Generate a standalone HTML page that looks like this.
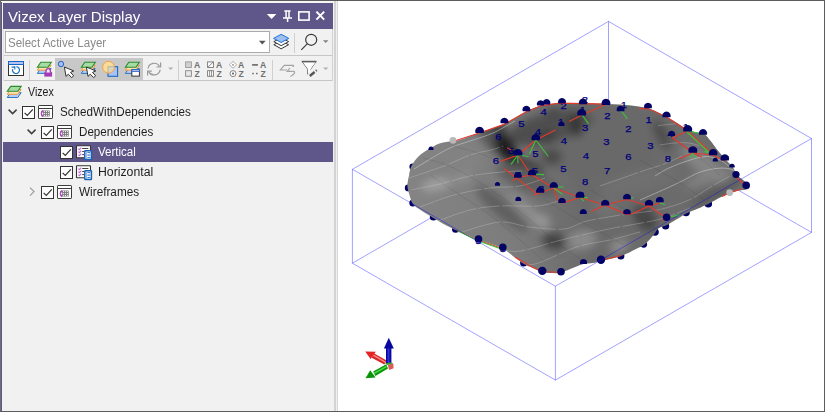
<!DOCTYPE html>
<html>
<head>
<meta charset="utf-8">
<title>Vizex Layer Display</title>
<style>
html,body{margin:0;padding:0;}
body{width:825px;height:412px;overflow:hidden;background:#fff;position:relative;font-family:"Liberation Sans",sans-serif;}
.abs{position:absolute;}
#panel{position:absolute;left:0;top:0;width:338px;height:412px;background:#f1f1f1;}
#titlebar{position:absolute;left:3px;top:3px;width:330px;height:26px;background:#5f5689;}
.t{position:absolute;white-space:nowrap;transform-origin:0 0;line-height:1;}
#title{left:8px;top:9.3px;font-size:15px;color:#fff;transform:scaleX(1.007);}
#combo{position:absolute;left:5px;top:31px;width:263px;height:20px;border:1px solid #ababab;background:#fff;}
#ph{left:8px;top:37px;font-size:12px;color:#8a8a8a;transform:scaleX(0.962);}
.hl{position:absolute;background:#cfcfcf;height:1px;}
.vl{position:absolute;background:#cfcfcf;width:1px;}
.row{position:absolute;left:3px;width:330px;height:20px;}
.lbl{font-size:12px;color:#1e1e1e;}
.cb{position:absolute;width:11px;height:11px;border:1px solid #333;background:#fff;}
</style>
</head>
<body>
<div id="panel">
  <div class="abs" style="left:0;top:0;width:1px;height:412px;background:#6e6e6e"></div>
  <div class="abs" style="left:1px;top:2px;width:1px;height:409px;background:#5f5689"></div>
  <div class="abs" style="left:2px;top:1px;width:332px;height:28px;background:#f5f5f3"></div>
  <div id="titlebar"></div>
  <div id="title" class="t">Vizex Layer Display</div>
  <div id="combo"></div>
  <div id="ph" class="t">Select Active Layer</div>
  <div class="hl" style="left:3px;top:55px;width:330px;background:#c6c6c6"></div>
  <div class="hl" style="left:3px;top:80px;width:330px;background:#c6c6c6"></div>
  <div class="vl" style="left:332px;top:29px;height:52px;background:#d2d2d2"></div>
  <div class="vl" style="left:3px;top:29px;height:52px;background:#e2e2e2"></div>
  <!-- tree -->
  <div class="row" style="top:142px;background:#5f5689"></div>
  <div class="t lbl" style="left:28.4px;top:86.2px;transform:scaleX(0.885)">Vizex</div>
  <div class="t lbl" style="left:59.6px;top:106.2px;transform:scaleX(0.971)">SchedWithDependencies</div>
  <div class="t lbl" style="left:78.8px;top:126.2px;transform:scaleX(0.967)">Dependencies</div>
  <div class="t lbl" style="left:98px;top:146.2px;color:#fff;transform:scaleX(0.962)">Vertical</div>
  <div class="t lbl" style="left:98px;top:166.2px;transform:scaleX(1.022)">Horizontal</div>
  <div class="t lbl" style="left:79px;top:186.2px;transform:scaleX(0.98)">Wireframes</div>

<svg class="abs" style="left:0;top:0" width="338" height="412" viewBox="0 0 338 412">
<defs>
  <g id="layers">
    <polygon points="3.6,6.6 14.2,6.6 10.9,11.4 0.3,11.4" fill="#b4cdf4" stroke="#1b6ac2" stroke-width="0.9"/>
    <polygon points="3.6,3.4 14.2,3.4 10.9,8.2 0.3,8.2" fill="#fbe2ae" stroke="#f0913a" stroke-width="0.9"/>
    <polygon points="3.8,0.3 14.3,0.3 11,5.2 0.4,5.2" fill="#a6dba6" stroke="#2c8c2c" stroke-width="1.1"/>
  </g>
  <g id="cursor">
    <polygon points="0,0 1.6,9.4 3.9,7.2 7.2,10.6 9.3,8.8 6.1,5.4 9.4,3.9" fill="#fff" stroke="#333" stroke-width="1" stroke-linejoin="round"/>
  </g>
  <g id="chk">
    <rect x="0.5" y="0.5" width="12" height="12" fill="#fff" stroke="#333" stroke-width="1"/>
    <polyline points="2.6,6.8 5.3,9.5 10.8,3.4" fill="none" stroke="#333" stroke-width="1.2"/>
  </g>
  <g id="sched">
    <rect x="0.5" y="0.5" width="14" height="13" rx="0.6" fill="#fff" stroke="#3c3c3c" stroke-width="1"/>
    <line x1="0.5" y1="3.5" x2="14.5" y2="3.5" stroke="#3c3c3c" stroke-width="1"/>
    <rect x="3.6" y="5.4" width="8.2" height="6.2" rx="0.6" fill="#7a7a7a"/>
    <path d="M6.1 6.6 h1 M8.1 6.6 h1 M10.1 6.6 h1 M6.1 8.6 h1 M8.1 8.6 h1 M10.1 8.6 h1 M6.1 10.6 h1 M8.1 10.6 h1 M10.1 10.6 h1" stroke="#fff" stroke-width="1" fill="none"/>
    <path d="M5.2 5.6 A2.6 3 0 0 0 5.2 11.4" fill="#caa4d4" stroke="#b23cc4" stroke-width="1.3"/>
    <rect x="3.9" y="7.9" width="1.3" height="1.3" fill="#fff"/>
  </g>
  <g id="dep">
    <rect x="0.5" y="0.5" width="14" height="12" rx="0.5" fill="#fff" stroke="#333" stroke-width="1.1"/>
    <path d="M2.4 3.4 l1 1 l1.9 -2 M2.4 6.4 l1 1 l1.9 -2 M2.4 9.5 l1 1 l1.9 -2" stroke="#c068d0" stroke-width="1.1" fill="none"/>
    <path d="M6.2 3.3 H12.4 M6.2 6.3 H8 M6.2 9.4 H8" stroke="#444" stroke-width="1" fill="none"/>
    <rect x="8.8" y="5.6" width="6.6" height="8.6" rx="0.5" fill="#fff" stroke="#1a62b4" stroke-width="1.5"/>
    <path d="M10.6 6 V14" stroke="#5a92dc" stroke-width="0.7" fill="none"/>
    <path d="M9.4 7.4 H14.8 M9.4 9.9 H14.8 M9.4 12.4 H14.8" stroke="#9cc0ee" stroke-width="0.8" fill="none"/>
    <path d="M11.6 7.4 H14.2 M11.6 9.9 H14.2 M11.6 12.4 H14.2" stroke="#2a6ec8" stroke-width="0.9" fill="none"/>
  </g>
</defs>
<!-- title buttons -->
<polygon points="266.8,14 276.4,14 271.6,19" fill="#fff"/>
<path d="M284.3 11 H290.6 M286.1 11 V17.5 M289 11 V17.5 M283 18 H292 M287.6 18 V22" stroke="#fff" stroke-width="1.5" fill="none"/>
<rect x="298.8" y="11.9" width="10.3" height="8.2" fill="none" stroke="#fff" stroke-width="1.6"/>
<path d="M316.4 11.6 L324.2 19.6 M324.2 11.6 L316.4 19.6" stroke="#fff" stroke-width="2" fill="none"/>
<!-- combo arrow -->
<polygon points="258.9,40.7 265.7,40.7 262.3,44.4" fill="#555"/>
<!-- layers button -->
<polygon points="273.8,44.7 281.2,48.8 288.6,44.7 281.2,41" fill="#fff" stroke="#333" stroke-width="1"/>
<polygon points="273.8,41.6 281.2,45.7 288.6,41.6 281.2,38" fill="#fff" stroke="#333" stroke-width="1"/>
<polygon points="273.6,38.4 281.2,34.3 288.8,38.4 281.2,42.5" fill="#9dc0f0" stroke="#1a73d8" stroke-width="1"/>
<line x1="294.5" y1="33" x2="294.5" y2="53" stroke="#d0d0d0"/>
<circle cx="311.2" cy="39.8" r="5.5" fill="none" stroke="#3a3a3a" stroke-width="1.2"/>
<line x1="307.2" y1="43.9" x2="301.3" y2="49.8" stroke="#3a3a3a" stroke-width="1.2"/>
<polygon points="323,40.3 328.4,40.3 325.7,43" fill="#808080"/>
<!-- toolbar 2 -->
<rect x="55" y="58" width="88" height="22" fill="#c8c8c8"/>
<rect x="8.5" y="61.5" width="15" height="14" fill="#fff" stroke="#333" stroke-width="1"/>
<rect x="8.5" y="61.5" width="15" height="3" fill="#b4c4f2" stroke="#1d63c0" stroke-width="1"/>
<path d="M16.4 66.6 A3.5 3.5 0 1 1 12.6 69.2" fill="none" stroke="#1a6fc0" stroke-width="1.2"/>
<path d="M11.6 67.1 H14.8 M14.8 66.2 V69.4" fill="none" stroke="#1a6fc0" stroke-width="1.1"/>
<line x1="29.5" y1="60" x2="29.5" y2="80" stroke="#d0d0d0"/>
<use href="#layers" x="37" y="62"/>
<rect x="44.3" y="72.1" width="7.8" height="4.5" fill="#a23cb4"/>
<path d="M46 72.4 V70.8 A2.2 2.2 0 0 1 50.4 70.8 V72.4" fill="#f3e6f6" stroke="#a23cb4" stroke-width="1.4"/>
<circle cx="61" cy="64" r="2.7" fill="#a8bcf4" stroke="#2a6ac0" stroke-width="1"/>
<use href="#cursor" x="64.4" y="67"/>
<use href="#layers" x="81" y="62"/>
<use href="#cursor" x="86.4" y="67"/>
<rect x="108" y="66.7" width="9.6" height="9.6" fill="#a9c2f3" stroke="#1b6ac2" stroke-width="1.1"/>
<circle cx="108.5" cy="67.2" r="5.9" fill="#f9dc9a" stroke="#f2a247" stroke-width="1"/>
<clipPath id="cc"><circle cx="108.5" cy="67.2" r="5.4"/></clipPath>
<rect x="108" y="66.7" width="9.6" height="9.6" fill="#a9c2f3" stroke="#1b6ac2" stroke-width="1.1" opacity="0.3" clip-path="url(#cc)"/>
<use href="#layers" x="125" y="62"/>
<rect x="131.8" y="69.6" width="7.6" height="6.5" fill="#fff" stroke="#333" stroke-width="1"/>
<rect x="131.8" y="69.4" width="7.6" height="2" fill="#a3b4ee" stroke="#2a62c0" stroke-width="0.8"/>
<!-- refresh gray -->
<path d="M148 68.5 A6.2 6.2 0 0 1 159.6 66.6" fill="none" stroke="#9a9a9a" stroke-width="1.2"/>
<path d="M160.6 62.6 V67 H156.4" fill="none" stroke="#9a9a9a" stroke-width="1.2"/>
<path d="M160.2 69.6 A6.2 6.2 0 0 1 148.6 71.6" fill="none" stroke="#9a9a9a" stroke-width="1.2"/>
<path d="M147.6 75.6 V71.2 H151.8" fill="none" stroke="#9a9a9a" stroke-width="1.2"/>
<polygon points="168.1,67.4 173.3,67.4 170.7,70" fill="#b0b0b0"/>
<line x1="178.5" y1="60" x2="178.5" y2="80" stroke="#d0d0d0"/>
<!-- AZ icons -->
<g font-family="Liberation Sans, sans-serif" font-size="8.6" font-weight="bold" fill="#707070">
<rect x="185.6" y="61.9" width="5.8" height="5.6" fill="#d0d0d0" stroke="#999" stroke-width="0.9"/>
<rect x="185.6" y="70.7" width="5.8" height="5.6" fill="#e6e6e6" stroke="#888" stroke-width="0.9"/>
<text x="194" y="67.9">A</text><text x="194.4" y="76.8">Z</text>
<rect x="207.6" y="61.9" width="5.8" height="5.6" fill="#fff" stroke="#777" stroke-width="0.9"/>
<line x1="207.8" y1="67.3" x2="213.2" y2="62.1" stroke="#777" stroke-width="0.9"/>
<rect x="207.6" y="70.7" width="5.8" height="5.6" fill="#fff" stroke="#777" stroke-width="0.9"/>
<path d="M209.6 70.7 V76.3 M211.5 70.7 V76.3" stroke="#777" stroke-width="0.8"/>
<text x="216" y="67.9">A</text><text x="216.4" y="76.8">Z</text>
<polygon points="233,61.4 236.6,64.8 233,68.2 229.4,64.8" fill="#fff" stroke="#999" stroke-width="0.8"/>
<circle cx="233" cy="64.8" r="0.9" fill="#888"/>
<circle cx="233" cy="73.6" r="3" fill="#fff" stroke="#777" stroke-width="0.9"/>
<circle cx="233" cy="73.6" r="1.1" fill="#666"/>
<text x="238" y="67.9">A</text><text x="238.4" y="76.8">Z</text>
<rect x="252.1" y="64.1" width="5.8" height="1.6" fill="#666"/>
<rect x="252.3" y="72.8" width="1.5" height="1.5" fill="#666"/><rect x="256.1" y="72.8" width="1.5" height="1.5" fill="#666"/>
<text x="260" y="67.9">A</text><text x="260.4" y="76.8">Z</text>
</g>
<line x1="272.5" y1="60" x2="272.5" y2="80" stroke="#d0d0d0"/>
<!-- undo-ish -->
<path d="M293.8 65.4 H284.3 L280.3 70 H287" fill="none" stroke="#a2a2a2" stroke-width="1.1"/>
<path d="M293.8 65.4 L292.8 67" fill="none" stroke="#a2a2a2" stroke-width="1.1"/>
<path d="M289.8 68 L287.2 71.4 H291 C296 70.6 296 73 290.4 76.6" fill="none" stroke="#a2a2a2" stroke-width="1.1"/>
<!-- filter -->
<path d="M302.2 61.6 L307.7 69.2 V74.4 M316 61.6 L310.4 69.6" fill="none" stroke="#6a6a6a" stroke-width="1"/>
<polygon points="302.8,62 315.6,62 310.2,69.6 310.2,72 308.2,73.6 308.2,69.2" fill="#fff"/>
<line x1="301.8" y1="61.6" x2="316.4" y2="61.6" stroke="#5c5c5c" stroke-width="1.6"/>
<path d="M314.6 72 L309.8 76" stroke="#555" stroke-width="2.3" fill="none"/>
<path d="M316.8 70.2 L315.8 71" stroke="#6a6a6a" stroke-width="2.2" fill="none"/>
<polygon points="323,67.4 328.4,67.4 325.7,70" fill="#b0b0b0"/>
<!-- tree -->
<use href="#layers" x="6.9" y="86.1"/>
<polyline points="8.6,109.6 12.6,113.6 16.6,109.6" fill="none" stroke="#404040" stroke-width="1.5"/>
<use href="#chk" x="22" y="106"/>
<use href="#sched" x="38" y="105"/>
<polyline points="27.6,129.6 31.6,133.6 35.6,129.6" fill="none" stroke="#404040" stroke-width="1.5"/>
<use href="#chk" x="41" y="126"/>
<use href="#sched" x="57" y="125"/>
<use href="#chk" x="60" y="146"/>
<use href="#dep" x="76" y="145.2"/>
<use href="#chk" x="60" y="166"/>
<use href="#dep" x="76" y="165.2"/>
<polyline points="30,187.6 34,191.6 30,195.6" fill="none" stroke="#a0a0a0" stroke-width="1.3"/>
<use href="#chk" x="41" y="186"/>
<use href="#sched" x="57" y="185"/>
</svg>
  <!-- splitter -->
  <div class="abs" style="left:334px;top:1px;width:2px;height:410px;background:#d3d3d3"></div>
  <div class="abs" style="left:336px;top:1px;width:1px;height:410px;background:#f0f0f0"></div>
  <div class="abs" style="left:337px;top:1px;width:1px;height:410px;background:#d6d6d6"></div>
</div>
<svg id="view" class="abs" style="left:338px;top:0" width="487" height="412" viewBox="338 0 487 412">
<defs>
<clipPath id="sclip"><path d="M407.5 186.0 C407.4 182.8 408.3 179.3 409.0 176.0 C409.7 172.7 409.8 169.3 411.5 166.0 C413.2 162.7 416.1 158.8 419.0 156.0 C421.9 153.2 425.6 151.1 429.0 149.0 C432.4 146.9 436.0 144.8 439.5 143.5 C443.0 142.2 446.9 142.0 450.0 141.5 C453.1 141.0 455.0 141.2 458.0 140.5 C461.0 139.8 464.5 138.2 468.0 137.0 C471.5 135.8 475.2 134.3 479.0 133.0 C482.8 131.7 486.8 130.5 491.0 129.0 C495.2 127.5 500.0 125.8 504.0 124.0 C508.0 122.2 511.3 120.1 515.0 118.0 C518.7 115.9 522.8 113.2 526.0 111.5 C529.2 109.8 531.5 109.0 534.0 108.0 C536.5 107.0 538.3 106.2 541.0 105.5 C543.7 104.8 547.0 104.4 550.0 104.0 C553.0 103.6 555.5 103.2 559.0 103.0 C562.5 102.8 567.0 103.0 571.0 103.0 C575.0 103.0 579.0 103.2 583.0 103.3 C587.0 103.4 591.2 103.4 595.0 103.5 C598.8 103.6 602.3 103.8 606.0 104.0 C609.7 104.2 613.4 104.3 617.0 104.5 C620.6 104.7 624.0 105.0 627.5 105.3 C631.0 105.6 634.6 106.0 638.0 106.5 C641.4 107.0 644.8 107.4 648.0 108.3 C651.2 109.2 653.8 110.5 657.0 112.0 C660.2 113.5 663.7 115.2 667.0 117.0 C670.3 118.8 673.6 120.9 677.0 123.0 C680.4 125.1 684.3 127.9 687.5 129.5 C690.7 131.1 693.2 131.8 696.0 132.5 C698.8 133.2 701.6 132.6 704.0 134.0 C706.4 135.4 708.1 138.1 710.5 141.0 C712.9 143.9 715.9 148.3 718.5 151.5 C721.1 154.7 723.6 157.3 726.0 160.0 C728.4 162.7 731.2 165.0 733.0 167.5 C734.8 170.0 735.3 172.9 737.0 175.0 C738.7 177.1 741.1 178.3 743.0 180.0 C744.9 181.7 747.7 183.5 748.5 185.0 C749.3 186.5 749.9 188.0 748.0 189.0 C746.1 190.0 740.0 190.3 737.0 191.0 C734.0 191.7 732.7 192.0 730.0 193.0 C727.3 194.0 724.7 195.2 721.0 197.0 C717.3 198.8 711.8 202.1 708.0 204.0 C704.2 205.9 701.7 206.9 698.0 208.5 C694.3 210.1 689.3 211.8 686.0 213.5 C682.7 215.2 681.2 216.6 678.0 218.5 C674.8 220.4 670.2 223.4 667.0 225.0 C663.8 226.6 661.0 226.7 659.0 228.0 C657.0 229.3 656.3 231.3 655.0 233.0 C653.7 234.7 652.8 236.0 651.0 238.0 C649.2 240.0 646.5 243.2 644.0 245.0 C641.5 246.8 639.8 247.2 636.0 249.0 C632.2 250.8 626.8 254.0 621.0 256.0 C615.2 258.0 605.7 259.8 601.0 261.0 C596.3 262.2 595.9 262.5 593.0 263.0 C590.1 263.5 586.7 263.2 583.5 264.0 C580.3 264.8 577.8 266.1 574.0 267.5 C570.2 268.9 564.8 271.6 561.0 272.5 C557.2 273.4 554.2 273.1 551.0 273.0 C547.8 272.9 545.0 272.8 542.0 272.0 C539.0 271.2 536.0 269.3 533.0 268.0 C530.0 266.7 526.9 265.7 524.0 264.0 C521.1 262.3 519.0 260.6 515.5 258.0 C512.0 255.4 507.1 250.8 503.0 248.5 C498.9 246.2 495.1 245.4 491.0 244.0 C486.9 242.6 482.5 241.6 478.5 240.0 C474.5 238.4 470.8 236.2 467.0 234.5 C463.2 232.8 459.4 231.8 455.5 230.0 C451.6 228.2 447.2 226.0 443.5 224.0 C439.8 222.0 437.1 220.2 433.5 218.0 C429.9 215.8 425.4 213.3 422.0 211.0 C418.6 208.7 415.1 206.7 413.0 204.0 C410.9 201.3 410.4 198.0 409.5 195.0 C408.6 192.0 407.6 189.2 407.5 186.0Z"/></clipPath>
<filter id="b5" x="-50%" y="-50%" width="200%" height="200%"><feGaussianBlur stdDeviation="4.5"/></filter>
<linearGradient id="sg" gradientUnits="userSpaceOnUse" x1="410" y1="200" x2="750" y2="150"><stop offset="0" stop-color="#848484"/><stop offset="0.28" stop-color="#7c7c7c"/><stop offset="0.5" stop-color="#696969"/><stop offset="0.8" stop-color="#6c6c6c"/><stop offset="1" stop-color="#7a7a7a"/></linearGradient>
</defs>
<line x1="608.5" y1="21.4" x2="608.5" y2="115.3" stroke="#0000ff" stroke-width="1" stroke-opacity="0.37" />
<line x1="608.5" y1="115.3" x2="352.4" y2="263.2" stroke="#0000ff" stroke-width="1" stroke-opacity="0.37" />
<line x1="608.5" y1="115.3" x2="811.5" y2="232.4" stroke="#0000ff" stroke-width="1" stroke-opacity="0.37" />
<circle cx="412.6" cy="166.7" r="3.2" fill="#030364"/>
<circle cx="408.2" cy="187.9" r="3.4" fill="#030364"/>
<circle cx="412.9" cy="203" r="3.6" fill="#030364"/>
<circle cx="433.4" cy="217" r="3.6" fill="#030364"/>
<circle cx="455.6" cy="229.2" r="3.6" fill="#030364"/>
<circle cx="523.7" cy="263" r="3.6" fill="#030364"/>
<circle cx="620.8" cy="256" r="3.6" fill="#030364"/>
<circle cx="643.7" cy="244.3" r="3.4" fill="#030364"/>
<circle cx="655" cy="232" r="3.8" fill="#030364"/>
<circle cx="665.6" cy="226" r="3.6" fill="#030364"/>
<circle cx="686" cy="212.4" r="3.8" fill="#030364"/>
<circle cx="708.3" cy="203.7" r="3.8" fill="#030364"/>
<path d="M407.5 186.0 C407.4 182.8 408.3 179.3 409.0 176.0 C409.7 172.7 409.8 169.3 411.5 166.0 C413.2 162.7 416.1 158.8 419.0 156.0 C421.9 153.2 425.6 151.1 429.0 149.0 C432.4 146.9 436.0 144.8 439.5 143.5 C443.0 142.2 446.9 142.0 450.0 141.5 C453.1 141.0 455.0 141.2 458.0 140.5 C461.0 139.8 464.5 138.2 468.0 137.0 C471.5 135.8 475.2 134.3 479.0 133.0 C482.8 131.7 486.8 130.5 491.0 129.0 C495.2 127.5 500.0 125.8 504.0 124.0 C508.0 122.2 511.3 120.1 515.0 118.0 C518.7 115.9 522.8 113.2 526.0 111.5 C529.2 109.8 531.5 109.0 534.0 108.0 C536.5 107.0 538.3 106.2 541.0 105.5 C543.7 104.8 547.0 104.4 550.0 104.0 C553.0 103.6 555.5 103.2 559.0 103.0 C562.5 102.8 567.0 103.0 571.0 103.0 C575.0 103.0 579.0 103.2 583.0 103.3 C587.0 103.4 591.2 103.4 595.0 103.5 C598.8 103.6 602.3 103.8 606.0 104.0 C609.7 104.2 613.4 104.3 617.0 104.5 C620.6 104.7 624.0 105.0 627.5 105.3 C631.0 105.6 634.6 106.0 638.0 106.5 C641.4 107.0 644.8 107.4 648.0 108.3 C651.2 109.2 653.8 110.5 657.0 112.0 C660.2 113.5 663.7 115.2 667.0 117.0 C670.3 118.8 673.6 120.9 677.0 123.0 C680.4 125.1 684.3 127.9 687.5 129.5 C690.7 131.1 693.2 131.8 696.0 132.5 C698.8 133.2 701.6 132.6 704.0 134.0 C706.4 135.4 708.1 138.1 710.5 141.0 C712.9 143.9 715.9 148.3 718.5 151.5 C721.1 154.7 723.6 157.3 726.0 160.0 C728.4 162.7 731.2 165.0 733.0 167.5 C734.8 170.0 735.3 172.9 737.0 175.0 C738.7 177.1 741.1 178.3 743.0 180.0 C744.9 181.7 747.7 183.5 748.5 185.0 C749.3 186.5 749.9 188.0 748.0 189.0 C746.1 190.0 740.0 190.3 737.0 191.0 C734.0 191.7 732.7 192.0 730.0 193.0 C727.3 194.0 724.7 195.2 721.0 197.0 C717.3 198.8 711.8 202.1 708.0 204.0 C704.2 205.9 701.7 206.9 698.0 208.5 C694.3 210.1 689.3 211.8 686.0 213.5 C682.7 215.2 681.2 216.6 678.0 218.5 C674.8 220.4 670.2 223.4 667.0 225.0 C663.8 226.6 661.0 226.7 659.0 228.0 C657.0 229.3 656.3 231.3 655.0 233.0 C653.7 234.7 652.8 236.0 651.0 238.0 C649.2 240.0 646.5 243.2 644.0 245.0 C641.5 246.8 639.8 247.2 636.0 249.0 C632.2 250.8 626.8 254.0 621.0 256.0 C615.2 258.0 605.7 259.8 601.0 261.0 C596.3 262.2 595.9 262.5 593.0 263.0 C590.1 263.5 586.7 263.2 583.5 264.0 C580.3 264.8 577.8 266.1 574.0 267.5 C570.2 268.9 564.8 271.6 561.0 272.5 C557.2 273.4 554.2 273.1 551.0 273.0 C547.8 272.9 545.0 272.8 542.0 272.0 C539.0 271.2 536.0 269.3 533.0 268.0 C530.0 266.7 526.9 265.7 524.0 264.0 C521.1 262.3 519.0 260.6 515.5 258.0 C512.0 255.4 507.1 250.8 503.0 248.5 C498.9 246.2 495.1 245.4 491.0 244.0 C486.9 242.6 482.5 241.6 478.5 240.0 C474.5 238.4 470.8 236.2 467.0 234.5 C463.2 232.8 459.4 231.8 455.5 230.0 C451.6 228.2 447.2 226.0 443.5 224.0 C439.8 222.0 437.1 220.2 433.5 218.0 C429.9 215.8 425.4 213.3 422.0 211.0 C418.6 208.7 415.1 206.7 413.0 204.0 C410.9 201.3 410.4 198.0 409.5 195.0 C408.6 192.0 407.6 189.2 407.5 186.0Z" fill="url(#sg)"/>
<g clip-path="url(#sclip)"><g filter="url(#b5)">
<ellipse cx="610" cy="142" rx="80" ry="36" transform="rotate(-3 610 142)" fill="#696969" opacity="1"/>
<ellipse cx="690" cy="150" rx="40" ry="30" transform="rotate(30 690 150)" fill="#6c6c6c" opacity="1"/>
<ellipse cx="706" cy="166" rx="30" ry="9" transform="rotate(38 706 166)" fill="#858585" opacity="1"/>
<ellipse cx="718" cy="192" rx="32" ry="6" transform="rotate(-28 718 192)" fill="#585858" opacity="1"/>
<ellipse cx="705" cy="178" rx="22" ry="5" transform="rotate(-22 705 178)" fill="#828282" opacity="1"/>
<ellipse cx="445" cy="168" rx="40" ry="20" transform="rotate(-22 445 168)" fill="#828282" opacity="1"/>
<ellipse cx="436" cy="185" rx="15" ry="6" transform="rotate(-12 436 185)" fill="#a0a0a0" opacity="1"/>
<ellipse cx="462" cy="178" rx="10" ry="5" transform="rotate(-15 462 178)" fill="#8e8e8e" opacity="1"/>
<ellipse cx="548" cy="128" rx="42" ry="15" transform="rotate(-14 548 128)" fill="#4e4e4e" opacity="1"/>
<ellipse cx="494" cy="136" rx="12" ry="20" transform="rotate(-35 494 136)" fill="#565656" opacity="1"/>
<ellipse cx="565" cy="122" rx="28" ry="11" transform="rotate(-8 565 122)" fill="#505050" opacity="1"/>
<ellipse cx="500" cy="128" rx="6" ry="8" transform="rotate(-30 500 128)" fill="#404040" opacity="1"/>
<ellipse cx="506" cy="148" rx="9" ry="17" transform="rotate(-32 506 148)" fill="#1e1e1e" opacity="1"/>
<ellipse cx="515" cy="163" rx="9" ry="8" transform="rotate(0 515 163)" fill="#2c2c2c" opacity="1"/>
<ellipse cx="530" cy="166" rx="16" ry="6" transform="rotate(25 530 166)" fill="#3e3e3e" opacity="1"/>
<ellipse cx="552" cy="157" rx="10" ry="8" transform="rotate(0 552 157)" fill="#4a4a4a" opacity="1"/>
<ellipse cx="502" cy="209" rx="8" ry="34" transform="rotate(-49 502 209)" fill="#5e5e5e" opacity="1"/>
<ellipse cx="528" cy="180" rx="34" ry="11" transform="rotate(22 528 180)" fill="#5e5e5e" opacity="1"/>
<ellipse cx="576" cy="125" rx="7" ry="12" transform="rotate(-8 576 125)" fill="#343434" opacity="1"/>
<ellipse cx="547" cy="137" rx="8" ry="7" transform="rotate(0 547 137)" fill="#3c3c3c" opacity="1"/>
<ellipse cx="553" cy="113" rx="9" ry="5" transform="rotate(-10 553 113)" fill="#484848" opacity="1"/>
<ellipse cx="662" cy="135" rx="7" ry="17" transform="rotate(-25 662 135)" fill="#4e4e4e" opacity="1"/>
<ellipse cx="529" cy="212" rx="5.5" ry="28" transform="rotate(-49 529 212)" fill="#8e8e8e" opacity="1"/>
<ellipse cx="541" cy="221" rx="9" ry="6" transform="rotate(0 541 221)" fill="#989898" opacity="1"/>
<ellipse cx="554" cy="241" rx="12" ry="9" transform="rotate(10 554 241)" fill="#444444" opacity="1"/>
<ellipse cx="582" cy="240" rx="15" ry="10" transform="rotate(-10 582 240)" fill="#8a8a8a" opacity="1"/>
<ellipse cx="645" cy="218" rx="10" ry="15" transform="rotate(-40 645 218)" fill="#464646" opacity="1"/>
<ellipse cx="619" cy="246" rx="10" ry="6" transform="rotate(-20 619 246)" fill="#8e8e8e" opacity="1"/>
<ellipse cx="607" cy="207" rx="12" ry="10" transform="rotate(0 607 207)" fill="#727272" opacity="1"/>
<ellipse cx="640" cy="180" rx="40" ry="10" transform="rotate(-15 640 180)" fill="#707070" opacity="1"/>
</g>
<g fill="none" stroke="#d0d0d0" stroke-width="0.8" stroke-opacity="0.4" stroke-dasharray="40 2 22 2 30 2"><path d="M409.0 178.0 C414.8 176.0 433.8 169.8 444.0 166.0 C454.2 162.2 461.8 157.8 470.0 155.0 C478.2 152.2 487.5 151.0 493.0 149.5 C498.5 148.0 501.3 146.6 503.0 146.0"/><path d="M411.0 190.0 C415.8 189.0 430.2 186.3 440.0 184.0 C449.8 181.7 459.7 178.0 470.0 176.0 C480.3 174.0 493.3 172.8 502.0 172.0 C510.7 171.2 518.7 171.2 522.0 171.0"/><path d="M420.0 207.0 C425.7 205.0 442.3 198.2 454.0 195.0 C465.7 191.8 479.0 189.5 490.0 188.0 C501.0 186.5 510.8 187.7 520.0 186.0 C529.2 184.3 540.8 179.3 545.0 178.0"/><path d="M438.0 221.0 C443.3 219.2 459.7 212.5 470.0 210.0 C480.3 207.5 488.7 206.7 500.0 206.0 C511.3 205.3 528.3 206.8 538.0 206.0 C547.7 205.2 554.7 201.8 558.0 201.0"/><path d="M462.0 232.0 C468.3 230.3 488.8 222.8 500.0 222.0 C511.2 221.2 518.3 225.8 529.0 227.0 C539.7 228.2 554.3 230.0 564.0 229.0 C573.7 228.0 577.0 223.4 587.0 221.0 C597.0 218.6 612.0 216.4 624.0 214.5 C636.0 212.6 648.2 212.1 659.0 209.7 C669.8 207.3 680.2 203.9 689.0 200.0 C697.8 196.1 705.2 190.0 712.0 186.0 C718.8 182.0 727.0 177.7 730.0 176.0"/><path d="M487.0 243.0 C491.8 244.4 503.7 251.9 515.5 251.5 C527.3 251.1 542.5 244.6 558.0 240.8 C573.5 237.1 591.9 232.6 608.7 229.0 C625.5 225.4 645.5 222.9 659.0 219.4 C672.5 215.9 684.8 209.9 690.0 208.0"/><path d="M520.0 260.0 C522.5 260.7 525.4 266.2 535.0 264.0 C544.6 261.8 565.2 250.6 577.7 246.6 C590.2 242.6 599.6 242.4 610.0 240.0 C620.4 237.6 635.0 233.3 640.0 232.0"/><path d="M600.0 186.0 C606.7 183.7 629.3 175.7 640.0 172.0 C650.7 168.3 657.0 166.7 664.0 164.0 C671.0 161.3 679.0 157.3 682.0 156.0"/><path d="M658.0 125.6 C661.0 125.3 673.0 124.0 676.0 123.7"/><path d="M660.0 145.0 C662.5 144.7 670.2 143.3 675.0 143.0 C679.8 142.7 684.8 142.5 689.0 143.0 C693.2 143.5 698.2 145.5 700.0 146.0"/></g>
<g fill="none" stroke="#d8d8d8" stroke-width="0.9" stroke-opacity="0.55"><path d="M640.0 200.0 C644.2 198.2 658.0 192.2 665.0 189.0 C672.0 185.8 676.7 183.6 682.3 180.9 C687.9 178.2 693.4 174.6 698.8 172.6 C704.1 170.6 709.5 169.4 714.4 168.7 C719.3 168.0 724.1 167.9 728.0 168.5 C731.9 169.1 735.9 171.4 737.5 172.0"/><path d="M655.0 176.0 C657.3 174.7 663.3 170.6 669.0 168.0 C674.7 165.4 682.8 162.3 689.0 160.4 C695.2 158.5 700.8 156.6 706.0 156.5 C711.2 156.4 715.8 158.1 720.0 160.0 C724.2 161.9 729.2 166.7 731.0 168.0"/><path d="M414.0 169.0 C417.0 167.2 425.8 161.6 432.0 158.0 C438.2 154.4 444.7 150.3 451.0 147.5 C457.3 144.7 463.0 143.4 470.0 141.0 C477.0 138.6 485.5 136.3 493.0 133.0 C500.5 129.7 511.3 123.0 515.0 121.0"/></g>
<g fill="none" stroke="#303030" stroke-width="0.7" stroke-opacity="0.17"><path d="M423.0 157.7 C427.2 159.0 440.2 162.5 448.0 165.7 C455.8 168.8 461.3 171.5 470.0 176.6 C478.7 181.7 490.0 188.8 500.0 196.0 C510.0 203.2 520.0 211.8 530.0 220.0 C540.0 228.2 550.8 238.0 560.0 245.0 C569.2 252.0 580.8 259.2 585.0 262.0"/><path d="M452.4 146.0 C457.2 147.3 473.6 151.2 481.5 154.0 C489.4 156.8 496.9 161.5 500.0 163.0"/><path d="M430.0 175.0 C435.0 178.3 450.0 188.3 460.0 195.0 C470.0 201.7 480.0 207.5 490.0 215.0 C500.0 222.5 510.8 232.2 520.0 240.0 C529.2 247.8 540.8 258.3 545.0 262.0"/><path d="M544.7 200.0 C551.8 204.2 574.2 217.6 587.4 225.0 C600.6 232.4 617.9 241.4 624.0 244.7"/><path d="M590.0 190.0 C596.7 193.7 619.2 205.7 630.0 212.0 C640.8 218.3 650.8 225.3 655.0 228.0"/><path d="M640.0 160.0 C645.8 163.3 664.2 173.3 675.0 180.0 C685.8 186.7 700.0 196.7 705.0 200.0"/><path d="M655.0 130.0 C660.8 133.3 679.2 142.5 690.0 150.0 C700.8 157.5 715.0 170.8 720.0 175.0"/></g>
</g>
<g font-family="Liberation Sans, sans-serif" font-size="9.8" fill="#00007c" stroke="#00007c" stroke-width="0.25" text-anchor="middle">
<text x="543.7" y="115.1" textLength="6.3" lengthAdjust="spacingAndGlyphs">4</text>
<text x="563.7" y="108.6" textLength="6.3" lengthAdjust="spacingAndGlyphs">2</text>
<text x="585.0" y="102.5" textLength="6.3" lengthAdjust="spacingAndGlyphs">2</text>
<text x="582.7" y="113.2" textLength="6.3" lengthAdjust="spacingAndGlyphs">1</text>
<text x="561.0" y="124.9" textLength="6.3" lengthAdjust="spacingAndGlyphs">1</text>
<text x="607.4" y="119.2" textLength="6.3" lengthAdjust="spacingAndGlyphs">2</text>
<text x="585.2" y="130.9" textLength="6.3" lengthAdjust="spacingAndGlyphs">3</text>
<text x="623.9" y="108.4" textLength="6.3" lengthAdjust="spacingAndGlyphs">1</text>
<text x="628.3" y="131.9" textLength="6.3" lengthAdjust="spacingAndGlyphs">2</text>
<text x="648.7" y="122.5" textLength="6.3" lengthAdjust="spacingAndGlyphs">1</text>
<text x="563.9" y="144.3" textLength="6.3" lengthAdjust="spacingAndGlyphs">4</text>
<text x="606.4" y="144.9" textLength="6.3" lengthAdjust="spacingAndGlyphs">3</text>
<text x="650.3" y="148.7" textLength="6.3" lengthAdjust="spacingAndGlyphs">3</text>
<text x="586.0" y="158.8" textLength="6.3" lengthAdjust="spacingAndGlyphs">4</text>
<text x="628.3" y="160.4" textLength="6.3" lengthAdjust="spacingAndGlyphs">6</text>
<text x="670.5" y="137.1" textLength="6.3" lengthAdjust="spacingAndGlyphs">4</text>
<text x="686.0" y="129.7" textLength="6.3" lengthAdjust="spacingAndGlyphs">1</text>
<text x="668.0" y="162.3" textLength="6.3" lengthAdjust="spacingAndGlyphs">8</text>
<text x="521.4" y="127.1" textLength="6.3" lengthAdjust="spacingAndGlyphs">5</text>
<text x="498.4" y="139.9" textLength="6.3" lengthAdjust="spacingAndGlyphs">6</text>
<text x="537.9" y="135.4" textLength="6.3" lengthAdjust="spacingAndGlyphs">4</text>
<text x="511.0" y="154.3" textLength="6.3" lengthAdjust="spacingAndGlyphs">5</text>
<text x="535.3" y="156.8" textLength="6.3" lengthAdjust="spacingAndGlyphs">5</text>
<text x="495.9" y="164.0" textLength="6.3" lengthAdjust="spacingAndGlyphs">6</text>
<text x="563.5" y="172.2" textLength="6.3" lengthAdjust="spacingAndGlyphs">5</text>
<text x="535.0" y="173.7" textLength="6.3" lengthAdjust="spacingAndGlyphs">5</text>
<text x="607.2" y="173.7" textLength="6.3" lengthAdjust="spacingAndGlyphs">7</text>
<text x="517.9" y="178.3" textLength="6.3" lengthAdjust="spacingAndGlyphs">7</text>
<text x="585.2" y="184.9" textLength="6.3" lengthAdjust="spacingAndGlyphs">8</text>
<text x="541.2" y="191.9" textLength="6.3" lengthAdjust="spacingAndGlyphs">8</text>
<text x="581.0" y="198.1" textLength="6.3" lengthAdjust="spacingAndGlyphs">8</text>
<text x="478.5" y="243.7" textLength="6.3" lengthAdjust="spacingAndGlyphs">5</text>
<text x="503.0" y="252.2" textLength="6.3" lengthAdjust="spacingAndGlyphs">5</text>
</g>
<polyline points="453.0,141.5 478.5,133.2 503.5,124.6 526.0,112.0 541.0,105.8 559.5,103.2 583.0,103.6 606.0,104.2" fill="none" stroke="#e23a2c" stroke-width="1.2"/>
<polyline points="606.0,104.2 582.0,115.0 569.0,121.5" fill="none" stroke="#e23a2c" stroke-width="1.2"/>
<polyline points="555.5,130.0 535.8,140.0 517.9,155.0 499.4,161.7" fill="none" stroke="#e23a2c" stroke-width="1.2"/>
<polyline points="507.2,147.8 511.0,150.0" fill="none" stroke="#e23a2c" stroke-width="1.2"/>
<polyline points="517.9,155.0 528.5,171.0" fill="none" stroke="#e23a2c" stroke-width="1.2"/>
<polyline points="504.3,168.7 536.3,193.4" fill="none" stroke="#e23a2c" stroke-width="1.2"/>
<polyline points="512.0,180.8 517.9,177.5 532.0,175.0 553.8,188.0 580.0,197.5 605.0,205.0 627.0,199.5 649.0,206.0 660.0,203.0" fill="none" stroke="#e23a2c" stroke-width="1.2"/>
<polyline points="533.4,195.3 540.0,193.0 553.8,188.0" fill="none" stroke="#e23a2c" stroke-width="1.2"/>
<polyline points="553.8,188.0 557.7,200.2 562.0,203.0 580.0,197.5" fill="none" stroke="#e23a2c" stroke-width="1.2"/>
<polyline points="590.7,211.8 605.0,205.0 627.0,214.5 634.0,213.0 649.0,206.0 667.0,218.5" fill="none" stroke="#e23a2c" stroke-width="1.2"/>
<polyline points="639.0,108.7 648.0,108.5 666.5,117.0 687.7,131.0" fill="none" stroke="#e23a2c" stroke-width="1.2"/>
<polyline points="673.0,137.5 687.7,131.0" fill="none" stroke="#e23a2c" stroke-width="1.2"/>
<polyline points="672.0,137.5 692.8,152.5" fill="none" stroke="#e23a2c" stroke-width="1.2"/>
<polyline points="687.7,131.0 713.0,154.5" fill="none" stroke="#e23a2c" stroke-width="1.2"/>
<polyline points="679.0,158.7 692.8,153.0 713.0,155.0 724.8,161.0" fill="none" stroke="#e23a2c" stroke-width="1.2"/>
<polyline points="692.8,153.0 702.0,157.0" fill="none" stroke="#e23a2c" stroke-width="1.2"/>
<polyline points="457.0,230.5 479.0,240.5 503.7,249.0" fill="none" stroke="#e23a2c" stroke-width="1.2"/>
<polyline points="515.0,257.0 533.0,267.5 542.0,271.5 561.0,272.5" fill="none" stroke="#e23a2c" stroke-width="1.2"/>
<polyline points="601.0,260.5 621.0,255.5" fill="none" stroke="#e23a2c" stroke-width="1.2"/>
<polyline points="661.7,220.2 670.5,216.3" fill="none" stroke="#e23a2c" stroke-width="1.2"/>
<polyline points="722.0,196.5 729.5,193.0" fill="none" stroke="#e23a2c" stroke-width="1.2"/>
<polyline points="736.0,177.0 746.0,186.0" fill="none" stroke="#e23a2c" stroke-width="1.2"/>
<polyline points="729.5,193.0 741.0,189.0" fill="none" stroke="#e23a2c" stroke-width="1.2"/>
<polyline points="517.9,155.0 511.0,164.3" fill="none" stroke="#3cc43c" stroke-width="1.1"/>
<polyline points="517.9,155.0 517.9,163.3" fill="none" stroke="#3cc43c" stroke-width="1.1"/>
<polyline points="517.9,155.0 528.5,156.5" fill="none" stroke="#3cc43c" stroke-width="1.1"/>
<polyline points="535.8,140.0 529.5,154.0" fill="none" stroke="#3cc43c" stroke-width="1.1"/>
<polyline points="535.8,140.0 548.3,156.5" fill="none" stroke="#3cc43c" stroke-width="1.1"/>
<polyline points="532.0,174.0 544.0,174.6" fill="none" stroke="#3cc43c" stroke-width="1.1"/>
<polyline points="553.8,187.0 563.5,187.0" fill="none" stroke="#3cc43c" stroke-width="1.1"/>
<polyline points="553.8,188.0 562.5,194.4" fill="none" stroke="#3cc43c" stroke-width="1.1"/>
<polyline points="580.0,197.0 587.8,197.9" fill="none" stroke="#3cc43c" stroke-width="1.1"/>
<polyline points="580.0,197.0 583.9,201.2" fill="none" stroke="#3cc43c" stroke-width="1.1"/>
<polyline points="627.0,198.0 633.4,197.9" fill="none" stroke="#3cc43c" stroke-width="1.1"/>
<polyline points="582.0,115.0 588.5,123.7" fill="none" stroke="#3cc43c" stroke-width="1.1"/>
<polyline points="620.6,110.0 627.4,118.8" fill="none" stroke="#3cc43c" stroke-width="1.1"/>
<polyline points="479.0,133.0 484.0,131.0" fill="none" stroke="#3cc43c" stroke-width="1.1"/>
<polyline points="688.0,131.0 703.0,134.0" fill="none" stroke="#3cc43c" stroke-width="1.1"/>
<polyline points="686.5,131.5 709.0,152.5" fill="none" stroke="#3cc43c" stroke-width="1.1"/>
<polyline points="704.4,151.4 713.0,154.0" fill="none" stroke="#3cc43c" stroke-width="1.1"/>
<polyline points="692.8,153.0 690.0,158.0" fill="none" stroke="#3cc43c" stroke-width="1.1"/>
<polyline points="692.8,153.0 695.5,158.0" fill="none" stroke="#3cc43c" stroke-width="1.1"/>
<polyline points="667.0,218.0 680.0,214.5" fill="none" stroke="#3cc43c" stroke-width="1.1"/>
<polyline points="660.0,203.0 665.0,204.5" fill="none" stroke="#3cc43c" stroke-width="1.1"/>
<polyline points="458.0,231.0 480.0,241.5 504.0,250.0" fill="none" stroke="#3cc43c" stroke-width="1.1"/>
<circle cx="453" cy="140.3" r="3.4" fill="#b8b8b8"/>
<circle cx="729.7" cy="192.6" r="3.4" fill="#b8b8b8"/>
<circle cx="478.5" cy="239" r="3.8" fill="#030364"/>
<circle cx="502.8" cy="247.3" r="3.8" fill="#030364"/>
<circle cx="542.3" cy="270.9" r="4.2" fill="#030364"/>
<circle cx="561" cy="271.8" r="3.8" fill="#030364"/>
<path d="M580.2 264.0 A3.6 3.6 0 1 1 586.8 264.0 Z" fill="#030364"/>
<circle cx="601" cy="259.8" r="4.2" fill="#030364"/>
<circle cx="666.6" cy="217.3" r="3.8" fill="#030364"/>
<circle cx="746.2" cy="185.2" r="3.8" fill="#030364"/>
<circle cx="736" cy="174.5" r="3.6" fill="#030364"/>
<path d="M699.1 134.8 A4.2 4.2 0 1 1 706.9 134.8 Z" fill="#030364"/>
<path d="M683.5 131.4 A4.6 4.6 0 1 1 691.9 131.4 Z" fill="#030364"/>
<path d="M662.6 117.3 A4.2 4.2 0 1 1 670.4 117.3 Z" fill="#030364"/>
<path d="M644.3 108.2 A4.0 4.0 0 1 1 651.7 108.2 Z" fill="#030364"/>
<path d="M602.0 104.9 A4.4 4.4 0 1 1 610.0 104.9 Z" fill="#030364"/>
<path d="M579.1 104.3 A4.2 4.2 0 1 1 586.9 104.3 Z" fill="#030364"/>
<path d="M558.3 103.5 A4.0 4.0 0 1 1 565.7 103.5 Z" fill="#030364"/>
<path d="M543.1 104.4 A3.8 3.8 0 1 1 550.1 104.4 Z" fill="#030364"/>
<path d="M537.1 105.6 A3.8 3.8 0 1 1 544.1 105.6 Z" fill="#030364"/>
<path d="M522.7 111.2 A4.0 4.0 0 1 1 530.1 111.2 Z" fill="#030364"/>
<path d="M500.7 123.2 A4.0 4.0 0 1 1 508.1 123.2 Z" fill="#030364"/>
<path d="M475.6 132.9 A4.4 4.4 0 1 1 483.6 132.9 Z" fill="#030364"/>
<path d="M577.5 115.5 A4.6 4.6 0 1 1 585.9 115.5 Z" fill="#030364"/>
<path d="M616.9 111.2 A4.0 4.0 0 1 1 624.3 111.2 Z" fill="#030364"/>
<path d="M558.5 126.0 A3.2 3.2 0 1 1 564.3 126.0 Z" fill="#030364"/>
<path d="M668.3 135.9 A3.6 3.6 0 1 1 674.9 135.9 Z" fill="#030364"/>
<path d="M688.6 152.7 A4.6 4.6 0 1 1 697.0 152.7 Z" fill="#030364"/>
<path d="M709.1 155.2 A4.4 4.4 0 1 1 717.1 155.2 Z" fill="#030364"/>
<path d="M720.8 160.5 A4.4 4.4 0 1 1 728.8 160.5 Z" fill="#030364"/>
<path d="M712.9 161.4 A2.6 2.6 0 1 1 717.7 161.4 Z" fill="#030364"/>
<path d="M729.4 167.6 A2.8 2.8 0 1 1 734.6 167.6 Z" fill="#030364"/>
<path d="M513.7 155.4 A4.6 4.6 0 1 1 522.1 155.4 Z" fill="#030364"/>
<path d="M531.8 140.3 A4.4 4.4 0 1 1 539.8 140.3 Z" fill="#030364"/>
<path d="M514.2 177.7 A4.0 4.0 0 1 1 521.6 177.7 Z" fill="#030364"/>
<path d="M528.1 175.3 A4.2 4.2 0 1 1 535.9 175.3 Z" fill="#030364"/>
<path d="M536.3 192.8 A4.2 4.2 0 1 1 544.1 192.8 Z" fill="#030364"/>
<path d="M549.9 187.8 A4.2 4.2 0 1 1 557.7 187.8 Z" fill="#030364"/>
<path d="M558.5 203.1 A3.8 3.8 0 1 1 565.5 203.1 Z" fill="#030364"/>
<path d="M576.0 197.7 A4.4 4.4 0 1 1 584.0 197.7 Z" fill="#030364"/>
<path d="M601.3 205.4 A4.2 4.2 0 1 1 609.1 205.4 Z" fill="#030364"/>
<path d="M623.3 199.3 A4.0 4.0 0 1 1 630.7 199.3 Z" fill="#030364"/>
<path d="M623.5 214.2 A3.8 3.8 0 1 1 630.5 214.2 Z" fill="#030364"/>
<path d="M580.0 214.1 A3.6 3.6 0 1 1 586.6 214.1 Z" fill="#030364"/>
<path d="M645.1 205.4 A4.2 4.2 0 1 1 652.9 205.4 Z" fill="#030364"/>
<path d="M656.1 202.2 A4.0 4.0 0 1 1 663.5 202.2 Z" fill="#030364"/>
<path d="M495.1 185.7 A2.6 2.6 0 1 1 499.9 185.7 Z" fill="#030364"/>
<path d="M515.5 200.9 A3.0 3.0 0 1 1 521.1 200.9 Z" fill="#030364"/>
<path d="M428.6 150.1 A2.6 2.6 0 1 1 433.4 150.1 Z" fill="#030364"/>
<line x1="608.5" y1="21.4" x2="352.4" y2="169.3" stroke="#0000ff" stroke-width="1" stroke-opacity="0.37" />
<line x1="608.5" y1="21.4" x2="811.5" y2="138.5" stroke="#0000ff" stroke-width="1" stroke-opacity="0.37" />
<line x1="352.4" y1="169.3" x2="555.4" y2="286.2" stroke="#0000ff" stroke-width="1" stroke-opacity="0.37" />
<line x1="555.4" y1="286.2" x2="811.5" y2="138.5" stroke="#0000ff" stroke-width="1" stroke-opacity="0.37" />
<line x1="352.4" y1="169.3" x2="352.4" y2="263.2" stroke="#0000ff" stroke-width="1" stroke-opacity="0.37" />
<line x1="555.4" y1="286.2" x2="555.4" y2="380.1" stroke="#0000ff" stroke-width="1" stroke-opacity="0.37" />
<line x1="811.5" y1="138.5" x2="811.5" y2="232.4" stroke="#0000ff" stroke-width="1" stroke-opacity="0.37" />
<line x1="352.4" y1="263.2" x2="555.4" y2="380.1" stroke="#0000ff" stroke-width="1" stroke-opacity="0.37" />
<line x1="555.4" y1="380.1" x2="811.5" y2="232.4" stroke="#0000ff" stroke-width="1" stroke-opacity="0.37" />
<g>
<polygon points="373.9,353.3 386.6,360.6 384.4,364.6 371.7,357.7" fill="#d82424"/>
<polygon points="373.6,354.6 386,361.8 385.4,362.9 373,355.8" fill="#ff8c8c"/>
<polygon points="365.2,351.6 375.8,351.8 370.6,359" fill="#e42424"/>
<polygon points="373.2,371.5 386.3,364.2 388,368.4 375.4,375.9" fill="#0a980a"/>
<polygon points="373.8,372.8 386.4,365.8 386.9,367 374.4,374.1" fill="#50dc50"/>
<polygon points="365.5,378.2 370.2,370.2 375.6,377.4" fill="#0a940a"/>
<rect x="386" y="347.6" width="5.4" height="16" fill="#0a0a9e"/>
<rect x="387.6" y="347.6" width="1.8" height="16" fill="#3030e0"/>
<polygon points="388.8,337.8 393.8,348.4 383.9,348.4" fill="#0808a0"/>
<polygon points="387.8,365 393.2,363.2 393.6,368.2 389.2,370" fill="#e05858"/>
<polygon points="384.9,363.5 390,362.3 393.2,363.2 387.8,365" fill="#2c9c2c"/>
</g>
</svg>
<div class="abs" style="left:0;top:0;width:825px;height:1px;background:#5c5c5c"></div>
<div class="abs" style="left:0;top:411px;width:825px;height:1px;background:#5c5c5c"></div>
<div class="abs" style="left:824px;top:0;width:1px;height:412px;background:#5c5c5c"></div>
</body>
</html>
